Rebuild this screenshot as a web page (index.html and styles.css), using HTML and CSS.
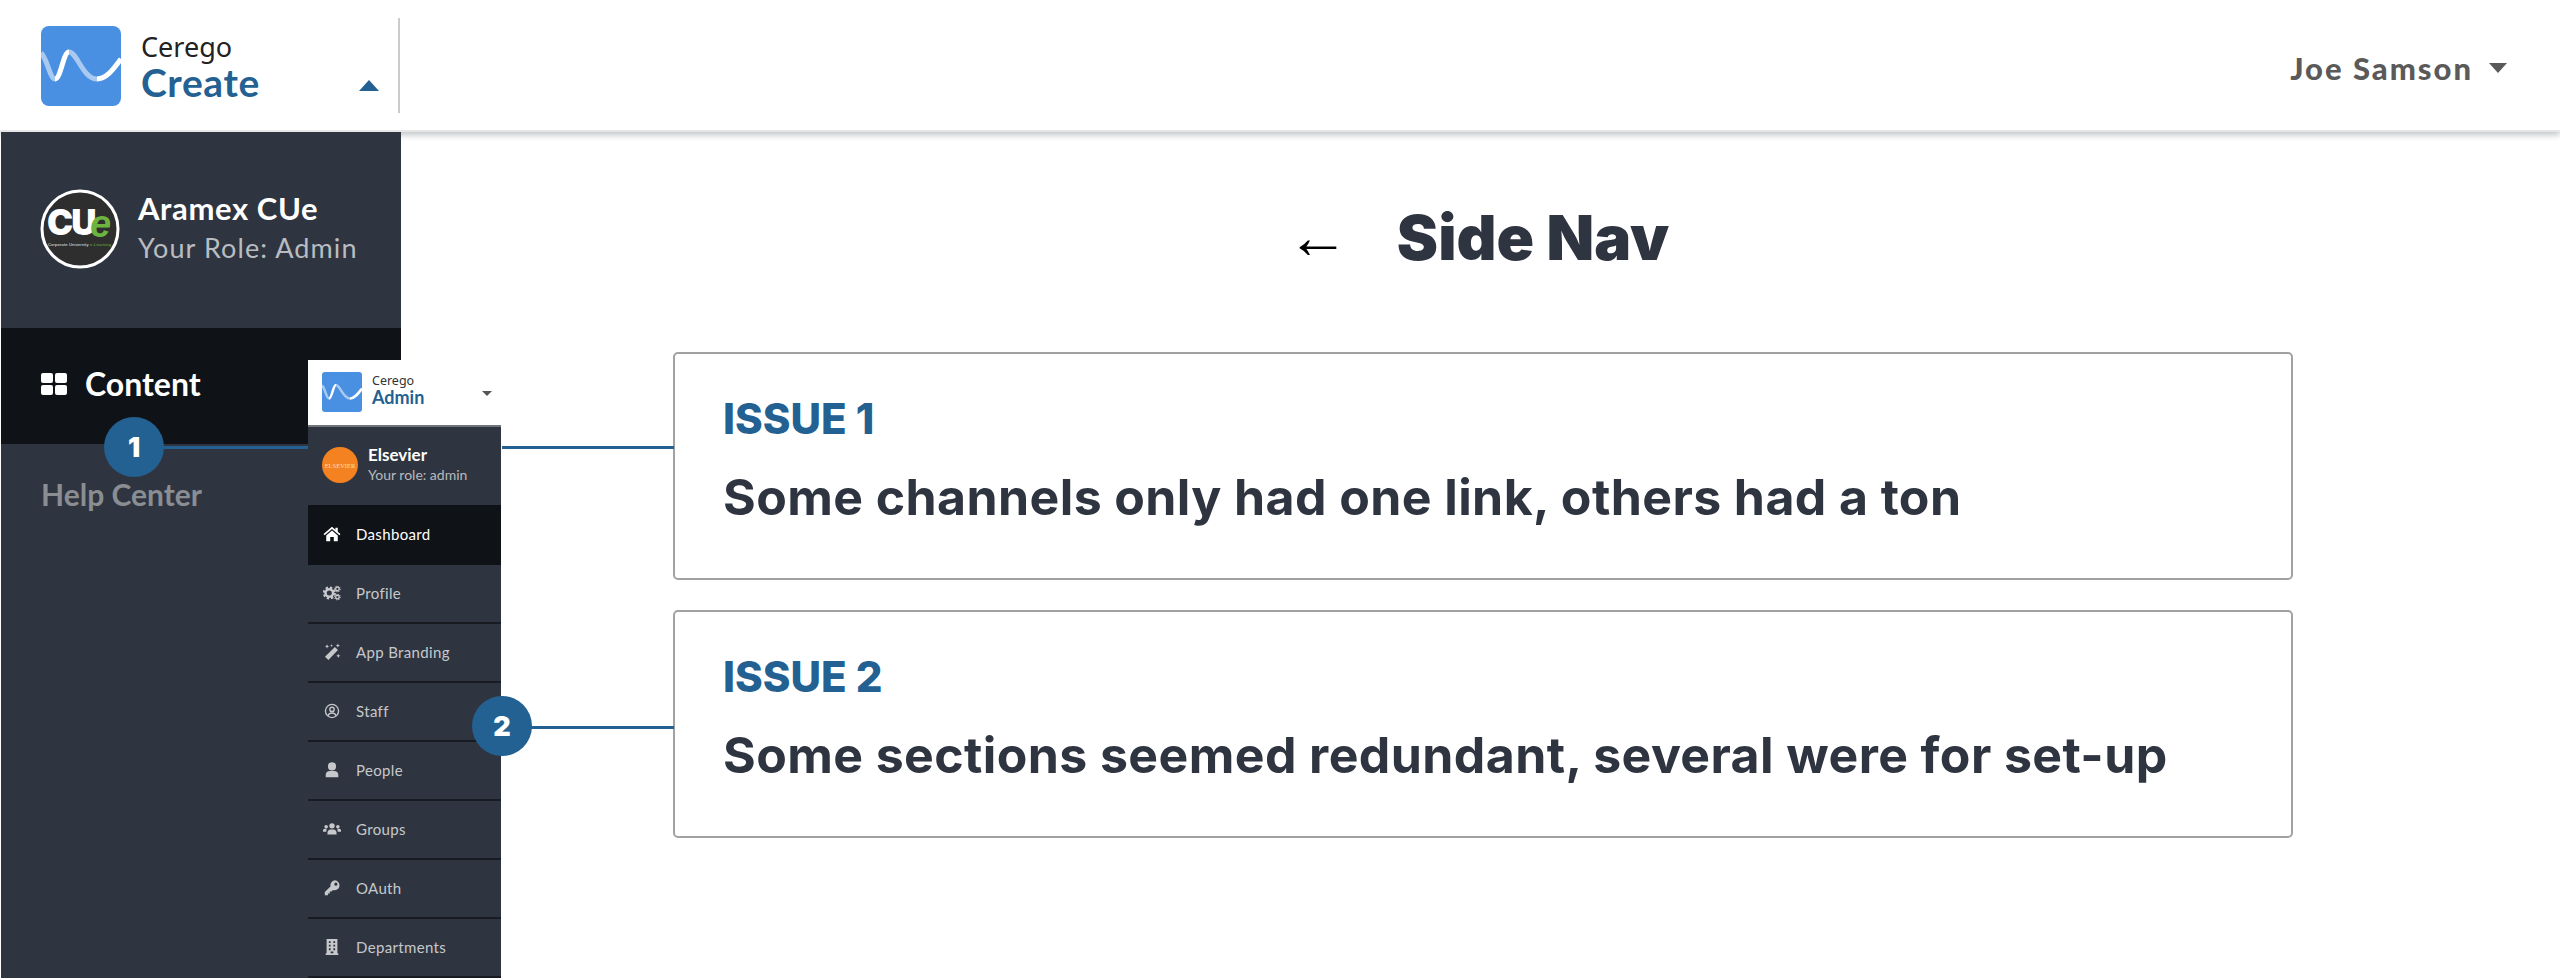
FILE: index.html
```html
<!DOCTYPE html>
<html lang="en">
<head>
<meta charset="utf-8">
<title>Side Nav</title>
<link rel="stylesheet" href="styles.css">
</head>
<body>
<div class="app">
  <header class="topbar">
    <div class="brand">
      <svg class="logo" viewBox="0 0 80 80"><rect width="80" height="80" rx="8" fill="#4a90e2"/><path d="M0 27C6 32 9 53 14 53" class="wave-light"/><path d="M14 53C20 53 22 26 28 26" class="wave-white"/><path d="M28 26C36 26 42 53 56 53" class="wave-light"/><path d="M56 53C66 53 73 42 80 33" class="wave-white"/></svg>
      <div class="brand-text"><span class="brand-top">Cerego</span><span class="brand-name">Create</span></div>
      <span class="caret caret-up"></span>
    </div>
    <div class="user"><span>Joe Samson</span><span class="caret caret-down"></span></div>
  </header>
  <div class="layout">
    <aside class="sidebar">
      <div class="org">
        <svg class="org-logo" viewBox="0 0 80 80"><circle cx="40" cy="40" r="38" fill="#2e2e2e" stroke="#fff" stroke-width="3"/><text x="7" y="46" class="cu">CU</text><text x="50" y="48" class="cu-e">e</text><text x="8" y="57" class="cu-small" textLength="63">Corporate University <tspan fill="#6cb33f">e-Learning</tspan></text></svg>
        <div class="org-text"><span class="org-name">Aramex CUe</span><span class="org-role">Your Role: Admin</span></div>
      </div>
      <div class="side-item active">
        <svg class="grid-icon" viewBox="0 0 26 22"><rect width="12" height="10" rx="2"/><rect x="14" width="12" height="10" rx="2"/><rect y="12" width="12" height="10" rx="2"/><rect x="14" y="12" width="12" height="10" rx="2"/></svg>
        <span>Content</span>
      </div>
      <div class="side-item help">Help Center</div>
    </aside>
    <main class="main">
      <h1 class="title"><span class="arrow">←</span><span>Side Nav</span></h1>
      <section class="card">
        <h2>ISSUE 1</h2>
        <p>Some channels only had one link, others had a ton</p>
      </section>
      <section class="card">
        <h2>ISSUE 2</h2>
        <p>Some sections seemed redundant, several were for set-up</p>
      </section>
    </main>
  </div>

  <div class="connector connector-1a"></div>
  <div class="connector connector-1b"></div>
  <div class="connector connector-2"></div>

  <nav class="mini">
    <div class="mini-head">
      <svg class="mini-logo" viewBox="0 0 80 80"><rect width="80" height="80" rx="6" fill="#4a90e2"/><path d="M0 27C6 32 9 53 14 53" class="wave-light"/><path d="M14 53C20 53 22 26 28 26" class="wave-white"/><path d="M28 26C36 26 42 53 56 53" class="wave-light"/><path d="M56 53C66 53 73 42 80 33" class="wave-white"/></svg>
      <div class="mini-brand"><span class="mini-top">Cerego</span><span class="mini-name">Admin</span></div>
      <span class="caret mini-caret"></span>
    </div>
    <div class="mini-org">
      <div class="mini-avatar">ELSEVIER</div>
      <div class="mini-org-text"><span class="mini-org-name">Elsevier</span><span class="mini-org-role">Your role: admin</span></div>
    </div>
    <div class="mini-row active">
      <svg class="mini-icon" viewBox="0 0 20 20"><path d="M10 2 .6 10l1.2 1.4L10 4.500l8.200 6.900 1.200-1.400-3-2.500V3h-2.600v2.200z"/><path d="M3.600 11.600 10 6.200l6.400 5.400V18h-4.400v-4.600H8V18H3.600z"/></svg>
      <span>Dashboard</span>
    </div>
    <div class="mini-row">
      <svg class="mini-icon" viewBox="0 0 20 20"><circle cx="7" cy="10" r="4.200" class="ic-line" stroke-width="2.800"/><circle cx="7" cy="10" r="6" class="ic-line" stroke-width="2.600" stroke-dasharray="2.600 2.100"/><circle cx="16" cy="5.500" r="2" class="ic-line" stroke-width="1.500"/><circle cx="16" cy="5.500" r="3" class="ic-line" stroke-width="1.200" stroke-dasharray="1.200 1.150"/><circle cx="16" cy="14.500" r="2" class="ic-line" stroke-width="1.500"/><circle cx="16" cy="14.500" r="3" class="ic-line" stroke-width="1.200" stroke-dasharray="1.200 1.150"/></svg>
      <span>Profile</span>
    </div>
    <div class="mini-row">
      <svg class="mini-icon" viewBox="0 0 20 20"><path d="M13.200 4.400 16.600 7.800 6 18.800 2.200 15.200z"/><path d="M4.500 1.500l.7 1.600 1.600.7-1.600.7-.7 1.600-.7-1.600-1.600-.7 1.600-.7zM16.500.500l.7 1.600 1.600.7-1.600.7-.7 1.600-.7-1.600-1.600-.7 1.600-.7zM17 12l.7 1.600 1.600.7-1.600.7-.7 1.600-.7-1.600-1.600-.7 1.600-.7zM9.500 1.500l.5 1 1 .5-1 .5-.5 1-.5-1-1-.5 1-.5z"/></svg>
      <span>App Branding</span>
    </div>
    <div class="mini-row">
      <svg class="mini-icon" viewBox="0 0 20 20"><circle cx="10" cy="10" r="7.300" class="ic-line" stroke-width="1.500"/><circle cx="10" cy="8.200" r="2.400" class="ic-line" stroke-width="1.500"/><path d="M5.500 15.200c1-2.400 2.600-3 4.500-3s3.500.6 4.500 3" class="ic-line" stroke-width="1.500"/></svg>
      <span>Staff</span>
    </div>
    <div class="mini-row">
      <svg class="mini-icon" viewBox="0 0 20 20"><circle cx="10" cy="6" r="4.500"/><path d="M3 18v-2.500C3 12.500 5 11 7.500 11h5c2.500 0 4.500 1.500 4.500 4.500V18z"/></svg>
      <span>People</span>
    </div>
    <div class="mini-row">
      <svg class="mini-icon" viewBox="0 0 20 20"><circle cx="10" cy="6.500" r="3"/><circle cx="3.500" cy="7.500" r="2"/><circle cx="16.500" cy="7.500" r="2"/><path d="M5 16v-2c0-2 1.500-3.500 3-3.500h4c1.500 0 3 1.500 3 3.500v2z"/><path d="M0 13v-1.500c0-1 .8-1.800 1.800-1.800h2.600C3.600 10.800 3.800 12 3.600 13zM20 13v-1.500c0-1-.8-1.800-1.800-1.800h-2.600c.8 1.100.6 2.300.8 3.300z"/></svg>
      <span>Groups</span>
    </div>
    <div class="mini-row">
      <svg class="mini-icon" viewBox="0 0 20 20"><path fill-rule="evenodd" d="M13 1.500a5.500 5.500 0 1 1-1.900 10.700l-1.600 1.800H7.500v2H5.500v2H2v-3.500l6.300-6.300A5.500 5.500 0 0 1 13 1.500zm1.300 2.500a1.700 1.700 0 1 0 0 3.400 1.700 1.700 0 0 0 0-3.400z"/></svg>
      <span>OAuth</span>
    </div>
    <div class="mini-row">
      <svg class="mini-icon" viewBox="0 0 20 20"><path fill-rule="evenodd" d="M4 1h12v16h1v2H3v-2h1zm2.500 2.500v2h2v-2zm5 0v2h2v-2zm-5 4v2h2v-2zm5 0v2h2v-2zm-5 4v2h2v-2zm5 0v2h2v-2zM8.500 15v2h3v-2z"/></svg>
      <span>Departments</span>
    </div>
  </nav>

  <div class="badge badge-1">1</div>
  <div class="badge badge-2">2</div>
</div>
</body>
</html>
```
FILE: styles.css
```css
* { box-sizing: border-box; }
html, body { margin: 0; height: 100%; }
body { background: #fff; font-family: "Lato", "Liberation Sans", sans-serif; overflow: hidden; }
.app { position: relative; width: 2560px; height: 978px; overflow: hidden; display: flex; flex-direction: column; }

.topbar { height: 132px; flex: none; display: flex; justify-content: space-between; align-items: flex-start; background: #fff; border-bottom: 2px solid #e6e6e6; box-shadow: 0 3px 6px rgba(40, 45, 55, .28); position: relative; padding-left: 1px; }
.brand { width: 399px; height: 95px; margin-top: 18px; display: flex; align-items: center; padding-left: 40px; border-right: 2px solid #ccc; position: relative; }
.logo { width: 80px; height: 80px; flex: none; }
.wave-light, .wave-white { fill: none; stroke-width: 5; }
.wave-light { stroke: #a9c9f1; }
.wave-white { stroke: #fff; }
.brand-text { margin-left: 20px; margin-top: -2px; display: flex; flex-direction: column; }
.brand-top { font-family: "Noto Sans", sans-serif; font-size: 27px; line-height: 34px; color: #222; }
.brand-name { font-size: 39px; line-height: 36px; font-weight: 700; color: #236192; letter-spacing: .6px; }
.caret { display: block; width: 0; height: 0; border-left: 9px solid transparent; border-right: 9px solid transparent; }
.caret-up { position: absolute; left: 358px; top: 62px; border-left-width: 10px; border-right-width: 10px; border-bottom: 11px solid #236192; }
.user { display: flex; align-items: center; gap: 16px; height: 64px; margin-top: 36px; padding-right: 53px; font-size: 31px; font-weight: 900; color: #5a5a5a; letter-spacing: 2px; }
.caret-down { border-top: 10px solid #5a5a5a; }

.layout { flex: 1; display: flex; min-height: 0; }
.sidebar { width: 400px; margin-left: 1px; flex: none; background: #2f3540; position: relative; }
.org { height: 196px; padding: 57px 0 0 39px; display: flex; gap: 18px; }
.org-logo { width: 80px; height: 80px; flex: none; }
.cu { font-family: "Inter", sans-serif; font-size: 35px; font-weight: 900; fill: #fff; letter-spacing: -2px; }
.cu-e { font-family: "Liberation Sans", sans-serif; font-size: 38px; font-weight: 700; font-style: italic; fill: #6cb33f; }
.cu-small { font-family: "Liberation Sans", sans-serif; font-size: 4px; fill: #eee; }
.org-text { display: flex; flex-direction: column; }
.org-name { font-size: 31px; line-height: 38px; font-weight: 700; color: #fff; letter-spacing: .6px; }
.org-role { font-size: 27px; line-height: 38px; margin-top: 2px; color: #b9bcc0; letter-spacing: 1.100px; font-weight: 400; }
.side-item { display: flex; align-items: center; padding-left: 40px; }
.side-item.active { height: 116px; background: #0f1216; color: #fff; font-size: 32px; font-weight: 700; gap: 18px; padding-bottom: 5px; }
.grid-icon { width: 26px; height: 22px; fill: #fff; }
.side-item.help { height: 100px; font-size: 30px; color: #8a8d92; font-weight: 700; }

.main { flex: 1; padding: 0 0 0 272px; }
.title { margin: 68px 0 0; width: 1620px; height: 76px; display: flex; justify-content: center; align-items: center; gap: 48px; font-family: "Inter", sans-serif; font-size: 62px; line-height: 76px; font-weight: 900; color: #2f3540; padding-right: 10px; }
.arrow { font-family: "Liberation Sans", sans-serif; font-weight: 400; font-size: 62px; color: #000; line-height: 60px; margin-top: -3px; }
.card { width: 1620px; height: 228px; margin-top: 0; border: 2px solid #a2a2a2; border-radius: 5px; padding: 42px 0 0 48px; }
.title + .card { margin-top: 76px; }
.card + .card { margin-top: 30px; }
.card h2 { margin: 0; font-family: "Inter", sans-serif; font-size: 42px; line-height: 46px; font-weight: 800; color: #236192; }
.card p { margin: 25px 0 0; font-family: "Inter", sans-serif; font-size: 50px; line-height: 60px; font-weight: 700; color: #2f3540; letter-spacing: .4px; }

.connector { position: absolute; height: 3px; background: #236192; }
.connector-1a { left: 164px; top: 446px; width: 145px; }
.connector-1b { left: 502px; top: 446px; width: 172px; }
.connector-2 { left: 530px; top: 726px; width: 144px; }

.mini { position: absolute; left: 308px; top: 360px; width: 193px; height: 618px; background: #2f3540; color: #c6c8cb; overflow: hidden; }
.mini-head { height: 67px; background: #fff; border-bottom: 2px solid #70747b; display: flex; align-items: flex-start; padding: 12px 0 0 14px; }
.mini-logo { width: 40px; height: 40px; flex: none; }
.mini-brand { margin-left: 10px; display: flex; flex-direction: column; }
.mini-top { font-family: "Noto Sans", sans-serif; font-size: 12.500px; line-height: 17px; color: #333; }
.mini-name { font-size: 18px; line-height: 17px; font-weight: 700; color: #236192; }
.mini-caret { position: absolute; left: 174px; top: 31px; border-left-width: 5px; border-right-width: 5px; border-top: 5px solid #555; }
.mini-org { height: 78px; display: flex; align-items: flex-start; gap: 10px; padding: 20px 0 0 14px; }
.mini-avatar { width: 36px; height: 36px; flex: none; border-radius: 50%; background: #f58220; color: #fbdcc0; font-family: "Liberation Serif", serif; font-size: 6.500px; display: flex; align-items: center; justify-content: center; }
.mini-org-text { display: flex; flex-direction: column; margin-top: -3px; }
.mini-org-name { font-size: 17px; line-height: 22px; font-weight: 700; color: #fff; }
.mini-org-role { font-size: 14px; line-height: 17px; color: #b8babd; }
.mini-row { height: 59px; display: flex; align-items: center; gap: 15px; padding: 0 0 1px 15px; font-size: 15px; letter-spacing: .35px; border-bottom: 2px solid #181c22; }
.mini-row.active { height: 60px; padding-bottom: 3px; background: #0f1216; color: #fff; border-bottom: 0; }
.mini-icon { width: 18px; height: 18px; flex: none; fill: #c6c8cb; }
.mini-row.active .mini-icon { fill: #fff; }
.ic-line { fill: none; stroke: #c6c8cb; }

.badge { position: absolute; width: 60px; height: 60px; border-radius: 50%; background: #236192; color: #fff; font-family: "Inter", sans-serif; font-size: 27px; font-weight: 900; display: flex; align-items: center; justify-content: center; }
.badge-1 { left: 104px; top: 417px; }
.badge-2 { left: 472px; top: 696px; }
```
